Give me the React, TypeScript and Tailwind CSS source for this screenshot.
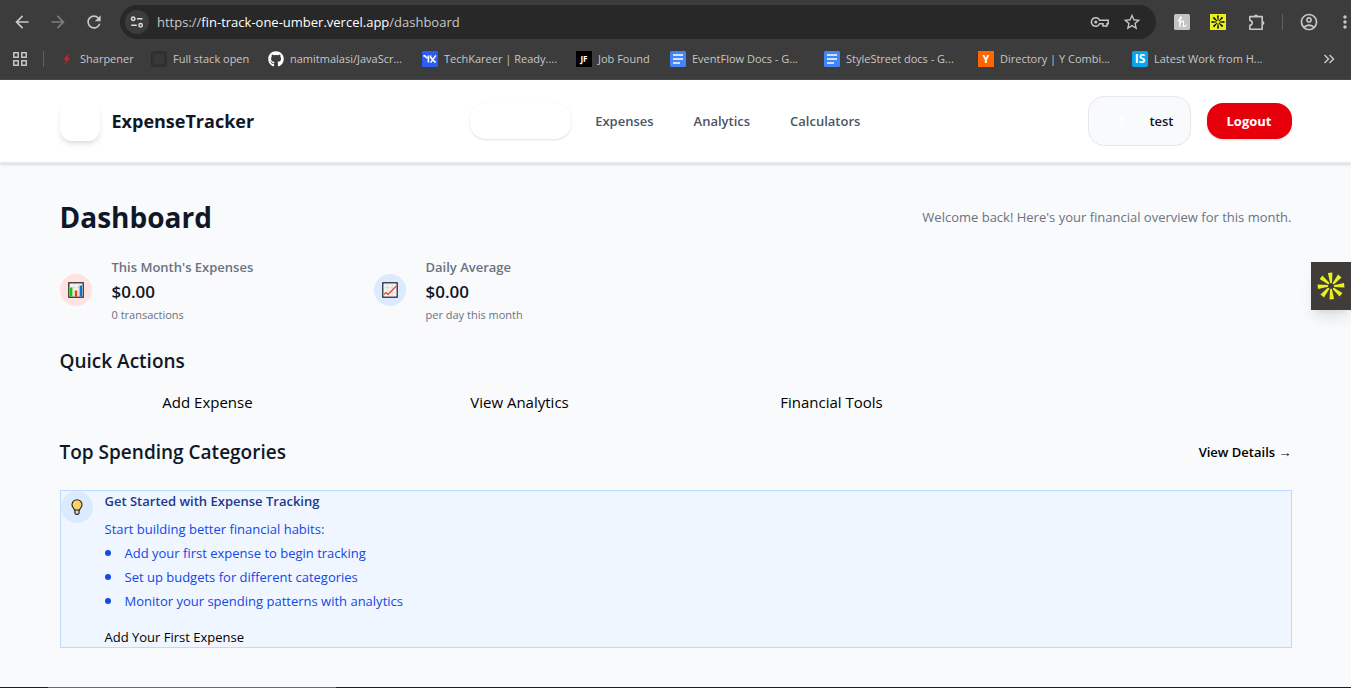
import type { ReactNode } from 'react'
import { FaGithub } from 'react-icons/fa'
import { MdArrowBack, MdArrowForward, MdMoreVert, MdOutlineAccountCircle, MdRefresh, MdStarOutline } from 'react-icons/md'

type Bookmark = {
  label: string
  icon: ReactNode
  width: string
}

type Stat = {
  label: string
  value: string
  note: string
  tone: string
  icon: ReactNode
}

const bookmarks: Bookmark[] = [
  { label: 'Sharpener', icon: <BoltIcon />, width: 'w-[93px]' },
  { label: 'Full stack open', icon: <BlankIcon />, width: 'w-[117px]' },
  { label: 'namitmalasi/JavaScr...', icon: <FaGithub className="size-4 text-white" />, width: 'w-[154px]' },
  { label: 'TechKareer | Ready....', icon: <TechKareerIcon />, width: 'w-[154px]' },
  { label: 'Job Found', icon: <LetterIcon text="JF" tone="bg-black text-[8px]" />, width: 'w-[94px]' },
  { label: 'EventFlow Docs - G...', icon: <DocsIcon />, width: 'w-[154px]' },
  { label: 'StyleStreet docs - G...', icon: <DocsIcon />, width: 'w-[154px]' },
  {
    label: 'Directory | Y Combi...',
    icon: <LetterIcon text="Y" tone="bg-[#ff6600] text-[11px]" />,
    width: 'w-[154px]',
  },
  {
    label: 'Latest Work from H...',
    icon: <LetterIcon text="IS" tone="rounded-xs bg-[#08a5ee] text-[12px]" />,
    width: 'w-[154px]',
  },
]

const stats: Stat[] = [
  {
    label: "This Month's Expenses",
    value: '$0.00',
    note: '0 transactions',
    tone: 'bg-red-100',
    icon: <BarChartIcon />,
  },
  {
    label: 'Daily Average',
    value: '$0.00',
    note: 'per day this month',
    tone: 'bg-blue-100',
    icon: <LineChartIcon />,
  },
]

const navLinks = ['Expenses', 'Analytics', 'Calculators']
const quickActions = ['Add Expense', 'View Analytics', 'Financial Tools']
const tips = [
  'Add your first expense to begin tracking',
  'Set up budgets for different categories',
  'Monitor your spending patterns with analytics',
]

export default function App() {
  return (
    <div className="relative flex min-h-screen flex-col bg-gray-50 font-['Open_Sans','Noto_Sans',sans-serif] text-[13px] leading-5 text-black">
      <BrowserChrome />
      <SiteHeader />
      <Dashboard />
      <SideWidget />
      <div className="flex h-px bg-[#1c1c1c]">
        <div className="ml-12 w-72 bg-[#6b6b6b]" />
      </div>
    </div>
  )
}

function BrowserChrome() {
  return (
    <div className="h-20 overflow-hidden border-b border-[#4a4a4a] bg-[#3c3c3c] text-[#c7c7c7]">
      <div className="flex h-11 items-center">
        <div className="flex w-[120px] shrink-0 items-center gap-4 pl-3">
          <button type="button" aria-label="Back">
            <MdArrowBack className="size-5" />
          </button>
          <button type="button" aria-label="Forward" className="text-[#7d7d7d]">
            <MdArrowForward className="size-5" />
          </button>
          <button type="button" aria-label="Reload">
            <MdRefresh className="size-5" />
          </button>
        </div>

        <div className="flex h-[34px] flex-1 items-center rounded-full bg-[#282828] pr-[14px] pl-[5px]">
          <button
            type="button"
            aria-label="Site information"
            className="flex size-6 items-center justify-center rounded-full bg-[#3c3c3c]"
          >
            <TuneIcon />
          </button>
          <p className="ml-2 flex-1">
            https://<span className="text-white">fin-track-one-umber.vercel.app</span>/dashboard
          </p>
          <div className="flex items-center gap-3">
            <KeyIcon />
            <MdStarOutline className="size-5" />
          </div>
        </div>

        <div className="flex w-[195px] shrink-0 items-center pl-[18px] *:shrink-0">
          <HoneyIcon />
          <SparkIcon />
          <PuzzleIcon />
          <div className="ml-4 h-4 w-px bg-[#5f5f5f]" />
          <MdOutlineAccountCircle className="ml-4 size-5" />
          <MdMoreVert className="ml-4 size-5" />
        </div>
      </div>

      <div className="flex h-[30px] items-center text-[11px]">
        <AppsIcon />
        <div className="ml-4 h-4 w-px bg-[#5f5f5f]" />
        <div className="ml-[14px] flex flex-1">
          {bookmarks.map((bookmark) => (
            <a key={bookmark.label} href="#" className={`flex shrink-0 items-center gap-1.5 ${bookmark.width}`}>
              <span className="shrink-0">{bookmark.icon}</span>
              <span className="whitespace-nowrap">{bookmark.label}</span>
            </a>
          ))}
        </div>
        <svg viewBox="0 0 12 10" className="mr-4 h-2.5 w-3 shrink-0" fill="none" stroke="currentColor" strokeWidth="1.5">
          <path d="M1.5 1 5.5 5l-4 4M6.5 1l4 4-4 4" />
        </svg>
      </div>
    </div>
  )
}

function SiteHeader() {
  return (
    <header className="border-b-2 border-gray-200 bg-white shadow-sm">
      <div className="mx-auto flex max-w-7xl items-center justify-between px-6 py-4">
        <a href="#" className="flex items-center gap-3">
          <span className="size-10 rounded-xl bg-white shadow-md" />
          <span className="text-lg font-bold text-gray-900">ExpenseTracker</span>
        </a>

        <nav className="ml-2 flex items-center font-semibold text-gray-600">
          <a href="#" aria-label="Dashboard" className="mr-1 h-9 w-[101px] rounded-2xl bg-white shadow-sm" />
          {navLinks.map((link) => (
            <a key={link} href="#" className="px-5 py-2">
              {link}
            </a>
          ))}
        </nav>

        <div className="flex items-center gap-4">
          <div className="flex items-center gap-3 rounded-2xl border border-gray-200 bg-gray-50 px-4 py-2">
            <span className="flex size-8 items-center justify-center font-bold text-white">T</span>
            <span className="font-semibold text-gray-900">test</span>
          </div>
          <button type="button" className="h-9 rounded-2xl bg-[#e7000b] px-5 font-bold text-white shadow-sm">
            Logout
          </button>
        </div>
      </div>
    </header>
  )
}

function Dashboard() {
  return (
    <main className="mx-auto w-full max-w-7xl flex-1 px-6 pt-[33px]">
      <div className="flex items-center justify-between">
        <h1 className="text-[28px] leading-10 font-bold text-gray-900">Dashboard</h1>
        <p className="text-gray-500">Welcome back! Here's your financial overview for this month.</p>
      </div>

      <section className="mt-5 grid grid-cols-4 gap-6">
        {stats.map((stat) => (
          <div key={stat.label} className="flex items-center gap-5">
            <div className={`flex size-8 items-center justify-center rounded-full ${stat.tone}`}>{stat.icon}</div>
            <div>
              <p className="font-semibold text-gray-500">{stat.label}</p>
              <p className="text-[17px] leading-[30px] font-semibold text-gray-900">{stat.value}</p>
              <p className="text-[11px] leading-4 text-gray-500">{stat.note}</p>
            </div>
          </div>
        ))}
      </section>

      <section className="mt-6">
        <h2 className="text-[19px] leading-7 font-semibold text-gray-900">Quick Actions</h2>
        <div className="mt-[15px] grid grid-cols-4 gap-4 text-[15px] leading-6">
          {quickActions.map((action) => (
            <a key={action} href="#" className="text-center">
              {action}
            </a>
          ))}
        </div>
      </section>

      <section className="mt-6">
        <div className="flex items-center justify-between">
          <h2 className="text-[19px] leading-7 font-semibold text-gray-900">Top Spending Categories</h2>
          <a href="#" className="font-semibold">
            View Details <span className="font-['Liberation_Sans',sans-serif] font-normal">→</span>
          </a>
        </div>
      </section>

      <section className="mt-6 flex gap-3 border border-blue-200 bg-blue-50">
        <div className="flex size-8 items-center justify-center rounded-full bg-blue-100">
          <BulbIcon />
        </div>
        <div>
          <h3 className="font-semibold text-blue-900">Get Started with Expense Tracking</h3>
          <div className="mt-2 text-blue-700">
            <p>Start building better financial habits:</p>
            <ul className="mt-1 space-y-1">
              {tips.map((tip) => (
                <li key={tip} className="flex items-center">
                  <span className="mr-[14px] size-1.5 rounded-full bg-blue-700" />
                  {tip}
                </li>
              ))}
            </ul>
          </div>
          <a href="#" className="mt-4 block">
            Add Your First Expense
          </a>
        </div>
      </section>
    </main>
  )
}

function SideWidget() {
  return (
    <button
      type="button"
      aria-label="Open assistant"
      className="absolute top-[262px] right-0 flex h-12 w-10 items-center justify-center bg-[#403c3a] shadow-lg"
    >
      <svg viewBox="0 0 28 28" className="size-7" fill="#e9f01d">
        {[0, 45, 90, 135, 180, 225, 270, 315].map((angle) => (
          <path key={angle} d="M10.9 1 15.4.5 15 10.8 13.2 11.2Z" transform={`rotate(${angle} 14 14)`} />
        ))}
      </svg>
    </button>
  )
}

function SparkIcon() {
  return (
    <svg viewBox="0 0 16 16" className="ml-5 size-4">
      <rect width="16" height="16" fill="#e9f01d" />
      {[0, 45, 90, 135, 180, 225, 270, 315].map((angle) => (
        <path key={angle} d="M7 1.6 8.8 1.5 8.4 6.6 7.7 6.7Z" transform={`rotate(${angle} 8 8)`} />
      ))}
    </svg>
  )
}

function LetterIcon({ text, tone }: { text: string; tone: string }) {
  return (
    <span className={`flex size-4 items-center justify-center leading-4 font-bold text-white ${tone}`}>{text}</span>
  )
}

function BoltIcon() {
  return (
    <svg viewBox="0 0 16 16" className="size-4" fill="#c4262c">
      <path d="M11.8 2 5 8.6l3.1.2L6 14l6.4-6.8-3-.2z" />
    </svg>
  )
}

function BlankIcon() {
  return (
    <svg viewBox="0 0 16 16" className="size-4">
      <rect x=".5" y=".5" width="15" height="15" rx="2" fill="#333333" stroke="#2c2c2c" />
      <rect x="2.5" y="2.5" width="11" height="11" fill="#383838" stroke="#2e2e2e" />
    </svg>
  )
}

function TechKareerIcon() {
  return (
    <svg viewBox="0 0 16 16" className="size-4">
      <rect width="16" height="16" rx="1" fill="#2c5bf5" />
      <path
        d="M1.3 4.9h1.5l2.4 2.4M6.4 4.4v7.2M8.6 4.4v2l5 5.2M13.8 4.4 8.7 11.6"
        fill="none"
        stroke="#fff"
        strokeWidth="1.6"
      />
    </svg>
  )
}

function DocsIcon() {
  return (
    <svg viewBox="0 0 16 16" className="size-4">
      <rect width="16" height="16" rx="1.5" fill="#4285f4" />
      <path d="M3 4h10M3 8h10M3 12h7" stroke="#fff" strokeWidth="1.7" />
    </svg>
  )
}

function AppsIcon() {
  return (
    <svg viewBox="0 0 14 14" className="ml-[13px] size-3.5 shrink-0" fill="none" stroke="currentColor" strokeWidth="1.5">
      <path d="M.8.8h4.4v4.4H.8zM8.8.8h4.4v4.4H8.8zM.8 8.8h4.4v4.4H.8zM8.8 8.8h4.4v4.4H8.8z" />
    </svg>
  )
}

function TuneIcon() {
  return (
    <svg viewBox="0 0 14 14" className="size-3.5" fill="none" stroke="#dedede" strokeWidth="1.5">
      <circle cx="3.2" cy="3.7" r="1.7" />
      <path d="M7 3.7h5.5M1.2 10.2h5.5" />
      <circle cx="10.6" cy="10.2" r="1.7" />
    </svg>
  )
}

function KeyIcon() {
  return (
    <svg viewBox="0 0 20 12" className="h-3 w-5" fill="none" stroke="currentColor" strokeWidth="1.5">
      <path d="M9.6 4.3A4.3 4.3 0 1 0 9.6 7.7H13V10h4V7.7h1.2V4.3z" />
      <circle cx="5.8" cy="6" r="1.6" fill="currentColor" stroke="none" />
    </svg>
  )
}

function HoneyIcon() {
  return (
    <svg viewBox="0 0 16 16" className="size-4">
      <rect width="16" height="16" rx="1.5" fill="#c3c3c3" />
      <path
        d="M4.2 6.8C6.2 6 7.4 4.4 7.2 3.2 6.4 2.2 5.6 4.4 5.8 7V12.6M5.9 9.6C7 7 9.8 6.2 9.6 8.2 9.4 10 8.8 12.4 9.9 12.6 10.8 12.6 11.4 12 11.9 11.2"
        fill="none"
        stroke="#fff"
        strokeWidth="1.2"
        strokeLinecap="round"
      />
    </svg>
  )
}

function PuzzleIcon() {
  return (
    <svg viewBox="0 0 18 18" className="ml-[22px] size-[18px]" fill="none" stroke="currentColor" strokeWidth="1.6">
      <path d="M1.8 3.6h12.4v12.6H1.8v-3.9a2.4 2.4 0 0 0 0-4.8z" strokeLinejoin="round" />
      <path d="M6 3.4a2 2 0 0 1 4 0zM14.4 7.9a2 2 0 0 1 0 4z" fill="currentColor" stroke="none" />
    </svg>
  )
}

function BarChartIcon() {
  return (
    <svg viewBox="0 0 16 16" className="size-4">
      <rect x=".8" y=".8" width="14.4" height="14.4" fill="#f3f3f3" stroke="#1f1f1f" strokeWidth="1.2" />
      <path d="M5.6 1.5v13M10.4 1.5v13M1.5 5.6h13" stroke="#d5d5d5" strokeWidth=".7" />
      <path d="M2 5.5h2.4v9H2z" fill="#16c60c" />
      <path d="M6.8 8.5h2.4v6H6.8z" fill="#f03a17" />
      <path d="M11.6 3.5H14v11h-2.4z" fill="#0078d7" />
    </svg>
  )
}

function LineChartIcon() {
  return (
    <svg viewBox="0 0 16 16" className="size-4">
      <rect x=".8" y=".8" width="14.4" height="14.4" fill="#f3f3f3" stroke="#1f1f1f" strokeWidth="1.2" />
      <path d="M5.5 1.5v13M10.3 1.5v13M1.5 5.7h13M1.5 10.4h13" stroke="#d5d5d5" strokeWidth=".7" />
      <path d="M1.8 12.6 4 10.8l2 1.6L14.4 4" fill="none" stroke="#f03a17" strokeWidth="1.1" />
    </svg>
  )
}

function BulbIcon() {
  return (
    <svg viewBox="0 0 16 16" className="size-4" stroke="#1f1f1f" strokeWidth="1.1">
      <path d="M5.9 10.3V14q0 1.4 2.1 1.4t2.1-1.4v-3.7z" fill="#d2d2d2" />
      <path d="M8 .8a5 5 0 0 0-5 4.9c0 2.4 1.7 3.1 2.4 5.3h5.2c.7-2.2 2.4-2.9 2.4-5.3A5 5 0 0 0 8 .8z" fill="#ffd067" />
    </svg>
  )
}
